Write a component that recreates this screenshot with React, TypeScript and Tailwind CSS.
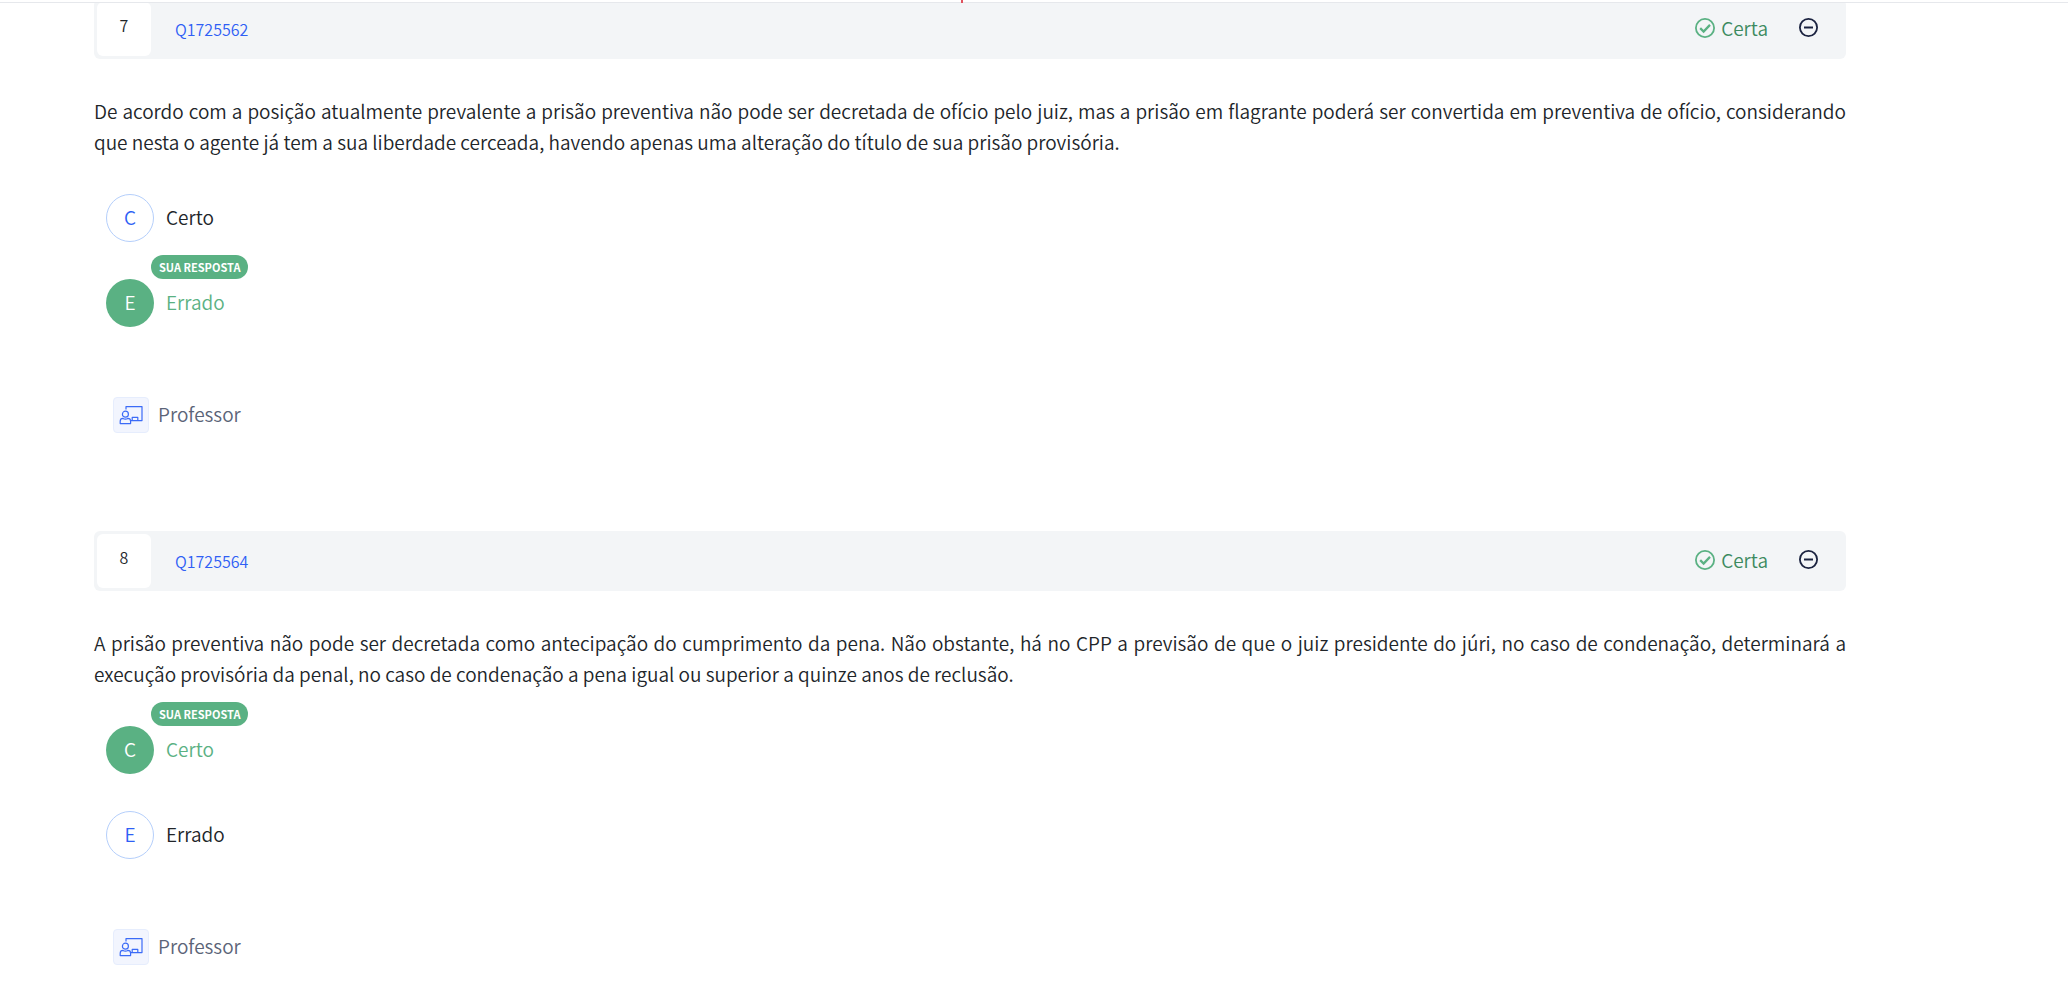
type Option = { letter: string; text: string };

type Question = {
  number: number;
  code: string;
  statement: string;
  chosen: string;
};

const options: Option[] = [
  { letter: "C", text: "Certo" },
  { letter: "E", text: "Errado" },
];

const questions: Question[] = [
  {
    number: 7,
    code: "Q1725562",
    statement:
      "De acordo com a posição atualmente prevalente a prisão preventiva não pode ser decretada de ofício pelo juiz, mas a prisão em flagrante poderá ser convertida em preventiva de ofício, considerando que nesta o agente já tem a sua liberdade cerceada, havendo apenas uma alteração do título de sua prisão provisória.",
    chosen: "E",
  },
  {
    number: 8,
    code: "Q1725564",
    statement:
      "A prisão preventiva não pode ser decretada como antecipação do cumprimento da pena. Não obstante, há no CPP a previsão de que o juiz presidente do júri, no caso de condenação, determinará a execução provisória da penal, no caso de condenação a pena igual ou superior a quinze anos de reclusão.",
    chosen: "C",
  },
];

function CheckIcon() {
  return (
    <svg className="h-5 w-5 text-[#5ab183]" viewBox="0 0 20 20" fill="none" stroke="currentColor" aria-hidden="true">
      <circle cx="10" cy="10" r="9.1" strokeWidth="1.8" />
      <path d="M5.2 10.2 8.6 13.5 15 6.9" strokeWidth="2.3" />
    </svg>
  );
}

function MinusIcon() {
  return (
    <svg className="h-5 w-5" viewBox="0 0 20 20" fill="none" stroke="currentColor" aria-hidden="true">
      <circle cx="9.5" cy="9.5" r="8.6" strokeWidth="1.8" />
      <path d="M5 9.5h9" strokeWidth="2" />
    </svg>
  );
}

function ProfessorIcon() {
  return (
    <svg className="h-5 w-6" viewBox="0 0 24 20" fill="none" stroke="currentColor" strokeWidth="1.2" strokeLinejoin="round" aria-hidden="true">
      {/* quadro */}
      <path d="M7 4.6V1.6h16v14H12" />
      <path d="M13.2 15.6v-3.2h5.6v3.2" />
      {/* pessoa */}
      <circle cx="6.4" cy="9.2" r="3" />
      <path d="M1.2 18.6v-2.4c0-1.7 1.2-2.8 2.8-2.8.8.5 1.6.7 2.4.7s1.6-.2 2.4-.7c1.6 0 2.8 1.1 2.8 2.8v2.4z" />
    </svg>
  );
}

function AnswerOption({ option, selected }: { option: Option; selected: boolean }) {
  return (
    <button type="button" aria-pressed={selected} className="relative flex items-center gap-3 text-[19px] leading-7">
      <span
        className={
          selected
            ? "flex h-12 w-12 items-center justify-center rounded-full bg-[#5ab183] pb-0.5 text-white"
            : "flex h-12 w-12 items-center justify-center rounded-full border border-[#b5cffb] pb-0.5 text-[#2f5ff5]"
        }
      >
        {option.letter}
      </span>
      <span className={selected ? "pb-0.5 text-[#5ab183]" : "pb-0.5 text-[#212529]"}>{option.text}</span>
      {selected && (
        <span className="absolute bottom-full left-[45px] flex h-6 items-center whitespace-nowrap rounded-full bg-[#5ab183] px-2 text-[11px] font-bold text-white">
          SUA RESPOSTA
        </span>
      )}
    </button>
  );
}

function QuestionCard({ question }: { question: Question }) {
  return (
    <article>
      <header className="flex h-[60px] items-center rounded-md bg-[#f3f5f7] pl-[3px] pr-[27px]">
        <span className="flex h-[54px] w-[54px] items-center justify-center rounded-md bg-white pb-2 text-base text-[#212529]">
          {question.number}
        </span>
        <a href={"#" + question.code} className="ml-6 text-base text-[#2f5ff5]">
          {question.code}
        </a>
        <div className="ml-auto flex items-center gap-[31px] pb-0.5">
          <span className="flex items-center gap-[6px] text-[19px] leading-7 text-[#3c8a60]">
            <CheckIcon />
            Certa
          </span>
          <button type="button" aria-label="Recolher questão" className="text-[#1b2340]">
            <MinusIcon />
          </button>
        </div>
      </header>

      <p className="mt-9 text-justify text-[19px] leading-[31px] text-[#212529]">{question.statement}</p>

      <div className="mt-[37px] flex flex-col items-start gap-[37px] pl-3">
        {options.map((option) => (
          <AnswerOption key={option.letter} option={option} selected={option.letter === question.chosen} />
        ))}
      </div>

      <button type="button" className="ml-[19px] mt-[70px] flex items-center gap-[9px] text-[19px] leading-7 text-[#5b6478]">
        <span className="flex h-9 w-9 items-center justify-center rounded-sm border border-[#e6edfd] bg-[#f2f5fe] text-[#3b6bf7]">
          <ProfessorIcon />
        </span>
        <span className="pb-0.5">Professor</span>
      </button>
    </article>
  );
}

export default function App() {
  return (
    <div className="min-h-screen overflow-hidden bg-white font-['Noto_Sans_CJK_SC',sans-serif] font-[350]">
      {/* borda inferior da barra do topo */}
      <div className="relative z-10 flex h-[3px] justify-center border-b border-[#e6e8ec] bg-white">
        <span className="mr-[145px] h-[3px] w-[2px] bg-[#e0525e]" />
      </div>
      <main className="-mt-1 flex flex-col gap-[98px] pl-[94px] pr-[222px]">
        {questions.map((question) => (
          <QuestionCard key={question.number} question={question} />
        ))}
      </main>
    </div>
  );
}
